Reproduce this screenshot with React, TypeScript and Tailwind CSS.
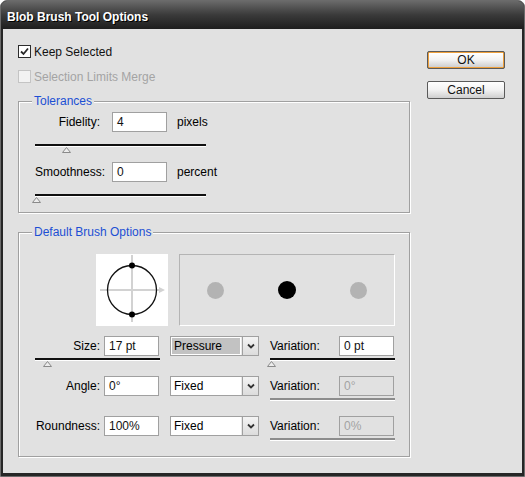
import React from 'react';

const Thumb = ({ left }: { left: number }) => (
  <svg className="absolute top-[3px]" style={{ left }} width="9" height="6" viewBox="0 0 9 6">
    <polygon points="0.5,5.5 4.5,0.5 8.5,5.5" fill="#ececec" stroke="#8a8a8a" strokeWidth="1" />
  </svg>
);

const Slider = ({ width, thumb, disabled }: { width: string; thumb?: number; disabled?: boolean }) => (
  <div className={`relative ${width}`}>
    <div className={`h-[2px] ${disabled ? 'bg-[#8c8c8c]' : 'bg-[#101010]'}`} />
    <div className="h-[1px] bg-white" />
    {thumb !== undefined && <Thumb left={thumb} />}
  </div>
);

const Field = ({ value, disabled, width = 'w-[55px]' }: { value: string; disabled?: boolean; width?: string }) => (
  <div
    className={`${width} h-[20px] border border-[#a0a0a0] flex items-center pl-[4px] ${
      disabled ? 'bg-[#e1e1e1] text-[#a3a3a3]' : 'bg-white text-[#111]'
    }`}
  >
    {value}
  </div>
);

const Dropdown = ({ value, highlighted }: { value: string; highlighted?: boolean }) => (
  <div className="w-[89px] h-[20px] border border-[#a0a0a0] bg-white flex">
    <div className="flex-1 p-[1px] border-r border-[#e8e8e8]">
      <div className={`h-full flex items-center pl-[2px] ${highlighted ? 'bg-[#c2c2c2]' : 'bg-white'}`}>{value}</div>
    </div>
    <div className="w-[16px] border-l border-[#a0a0a0] bg-gradient-to-b from-[#f4f4f4] to-[#dcdcdc] flex items-center justify-center">
      <svg width="8" height="6" viewBox="0 0 8 6">
        <polyline points="1,1.5 4,4.5 7,1.5" fill="none" stroke="#333" strokeWidth="1.8" />
      </svg>
    </div>
  </div>
);

const Checkbox = ({ checked, disabled, label }: { checked?: boolean; disabled?: boolean; label: string }) => (
  <div className="flex items-center h-[13px] gap-[3px]">
    <div
      className={`w-[13px] h-[13px] flex items-center justify-center border ${
        disabled ? 'border-[#c4c4c4] bg-[#f2f2f2]' : 'border-[#2c2c2c] bg-white'
      }`}
    >
      {checked && (
        <svg width="9" height="9" viewBox="0 0 9 9">
          <polyline points="1,4.5 3.5,7 8,1.5" fill="none" stroke="#2a2a2a" strokeWidth="1.8" />
        </svg>
      )}
    </div>
    <span className={disabled ? 'text-[#a4a4a4]' : 'text-[#111]'}>{label}</span>
  </div>
);

const Group = ({ title, height, children }: { title: string; height: string; children: React.ReactNode }) => (
  <div className={`relative w-[392px] ${height} border border-[#a0a0a0] shadow-[inset_1px_1px_0_#fff,1px_1px_0_#fff]`}>
    <span className="absolute left-[13px] top-[-8px] px-[2px] leading-[14px] bg-[#e1e1e1] text-[#1c4fd4]">{title}</span>
    {children}
  </div>
);

const Button = ({ label, primary }: { label: string; primary?: boolean }) => (
  <div className="w-[78px] h-[18px] rounded-[2px] border border-[#5a5a5a] bg-[#5a5a5a]">
    <div
      className={`h-full rounded-[1px] flex items-center justify-center bg-gradient-to-b from-white via-[#f2f2f2] to-[#cfcfcf] text-[#111] ${
        primary ? 'border border-[#eea03c]' : ''
      }`}
    >
      {label}
    </div>
  </div>
);

export default function App() {
  return (
    <div className="w-[525px] h-[477px] bg-white font-['Liberation_Sans',Arial,sans-serif] text-[12px] leading-[14px]">
      <div className="w-full h-full rounded-t-[7px] border border-[#6b6b6b] bg-[#262626] flex flex-col overflow-hidden">
        <div className="h-[28px] shrink-0 pl-[6px] pt-[3px] flex items-center bg-gradient-to-b from-[#6a6a6a] via-[#3a3a3a] to-[#1e1e1e] text-white font-bold text-[12px] [text-shadow:1px_1px_0_#000]">
          Blob Brush Tool Options
        </div>
        <div className="flex-1 mx-[2px] mb-[3px] bg-[#e1e1e1] flex">
          <div className="pl-[15px] pt-[16px] flex flex-col">
            <Checkbox checked label="Keep Selected" />
            <div className="mt-[12px]">
              <Checkbox disabled label="Selection Limits Merge" />
            </div>

            <div className="mt-[18px]">
              <Group title="Tolerances" height="h-[112px]">
                <div className="pl-[16px] pt-[10px] flex flex-col">
                  <div className="flex items-center">
                    <span className="w-[65px] text-right">Fidelity:</span>
                    <div className="ml-[12px]"><Field value="4" /></div>
                    <span className="ml-[10px]">pixels</span>
                  </div>
                  <div className="mt-[12px]"><Slider width="w-[171px]" thumb={27} /></div>
                  <div className="mt-[15px] flex items-center">
                    <span className="w-[65px] text-right">Smoothness:</span>
                    <div className="ml-[12px]"><Field value="0" /></div>
                    <span className="ml-[10px]">percent</span>
                  </div>
                  <div className="mt-[12px]"><Slider width="w-[171px]" thumb={-3} /></div>
                </div>
              </Group>
            </div>

            <div className="mt-[19px]">
              <Group title="Default Brush Options" height="h-[225px]">
                <div className="pt-[21px] flex flex-col">
                  <div className="flex ml-[77px]">
                    <div className="w-[72px] h-[72px] bg-white">
                      <svg width="72" height="72" viewBox="0 0 72 72">
                        <line x1="36" y1="1" x2="36" y2="68" stroke="#d2d2d2" strokeWidth="2" />
                        <line x1="4" y1="36" x2="64" y2="36" stroke="#d2d2d2" strokeWidth="2" />
                        <polygon points="63,33 69,36 63,39" fill="#d2d2d2" />
                        <circle cx="36" cy="36" r="24.5" fill="none" stroke="#111" strokeWidth="1.3" />
                        <circle cx="36" cy="11.5" r="3" fill="#000" />
                        <circle cx="36" cy="60.5" r="3" fill="#000" />
                      </svg>
                    </div>
                    <div className="ml-[11px] w-[216px] h-[72px] border-t border-l border-[#b4b4b4] border-r border-b border-r-white border-b-white flex items-center justify-around">
                      <div className="w-[17px] h-[17px] rounded-full bg-[#b3b3b3]" />
                      <div className="w-[18px] h-[18px] rounded-full bg-black" />
                      <div className="w-[17px] h-[17px] rounded-full bg-[#b3b3b3]" />
                    </div>
                  </div>

                  <div className="mt-[10px] pl-[16px] flex items-center">
                    <span className="w-[65px] text-right">Size:</span>
                    <div className="ml-[4px]"><Field value="17 pt" /></div>
                    <div className="ml-[11px]"><Dropdown value="Pressure" highlighted /></div>
                    <span className="ml-[11px] w-[69px]">Variation:</span>
                    <Field value="0 pt" />
                  </div>
                  <div className="mt-[2px] pl-[16px] flex">
                    <Slider width="w-[125px]" thumb={8} />
                    <div className="ml-[110px]"><Slider width="w-[125px]" thumb={-3} /></div>
                  </div>

                  <div className="mt-[15px] pl-[16px] flex items-center">
                    <span className="w-[65px] text-right">Angle:</span>
                    <div className="ml-[4px]"><Field value="0°" /></div>
                    <div className="ml-[11px]"><Dropdown value="Fixed" /></div>
                    <span className="ml-[11px] w-[69px]">Variation:</span>
                    <Field value="0°" disabled />
                  </div>
                  <div className="mt-[2px] pl-[251px] flex">
                    <Slider width="w-[125px]" disabled />
                  </div>

                  <div className="mt-[15px] pl-[16px] flex items-center">
                    <span className="w-[65px] text-right">Roundness:</span>
                    <div className="ml-[4px]"><Field value="100%" /></div>
                    <div className="ml-[11px]"><Dropdown value="Fixed" /></div>
                    <span className="ml-[11px] w-[69px]">Variation:</span>
                    <Field value="0%" disabled />
                  </div>
                  <div className="mt-[2px] pl-[251px] flex">
                    <Slider width="w-[125px]" disabled />
                  </div>
                </div>
              </Group>
            </div>
          </div>

          <div className="ml-[17px] pt-[22px] flex flex-col gap-[12px]">
            <Button label="OK" primary />
            <Button label="Cancel" />
          </div>
        </div>
      </div>
    </div>
  );
}
